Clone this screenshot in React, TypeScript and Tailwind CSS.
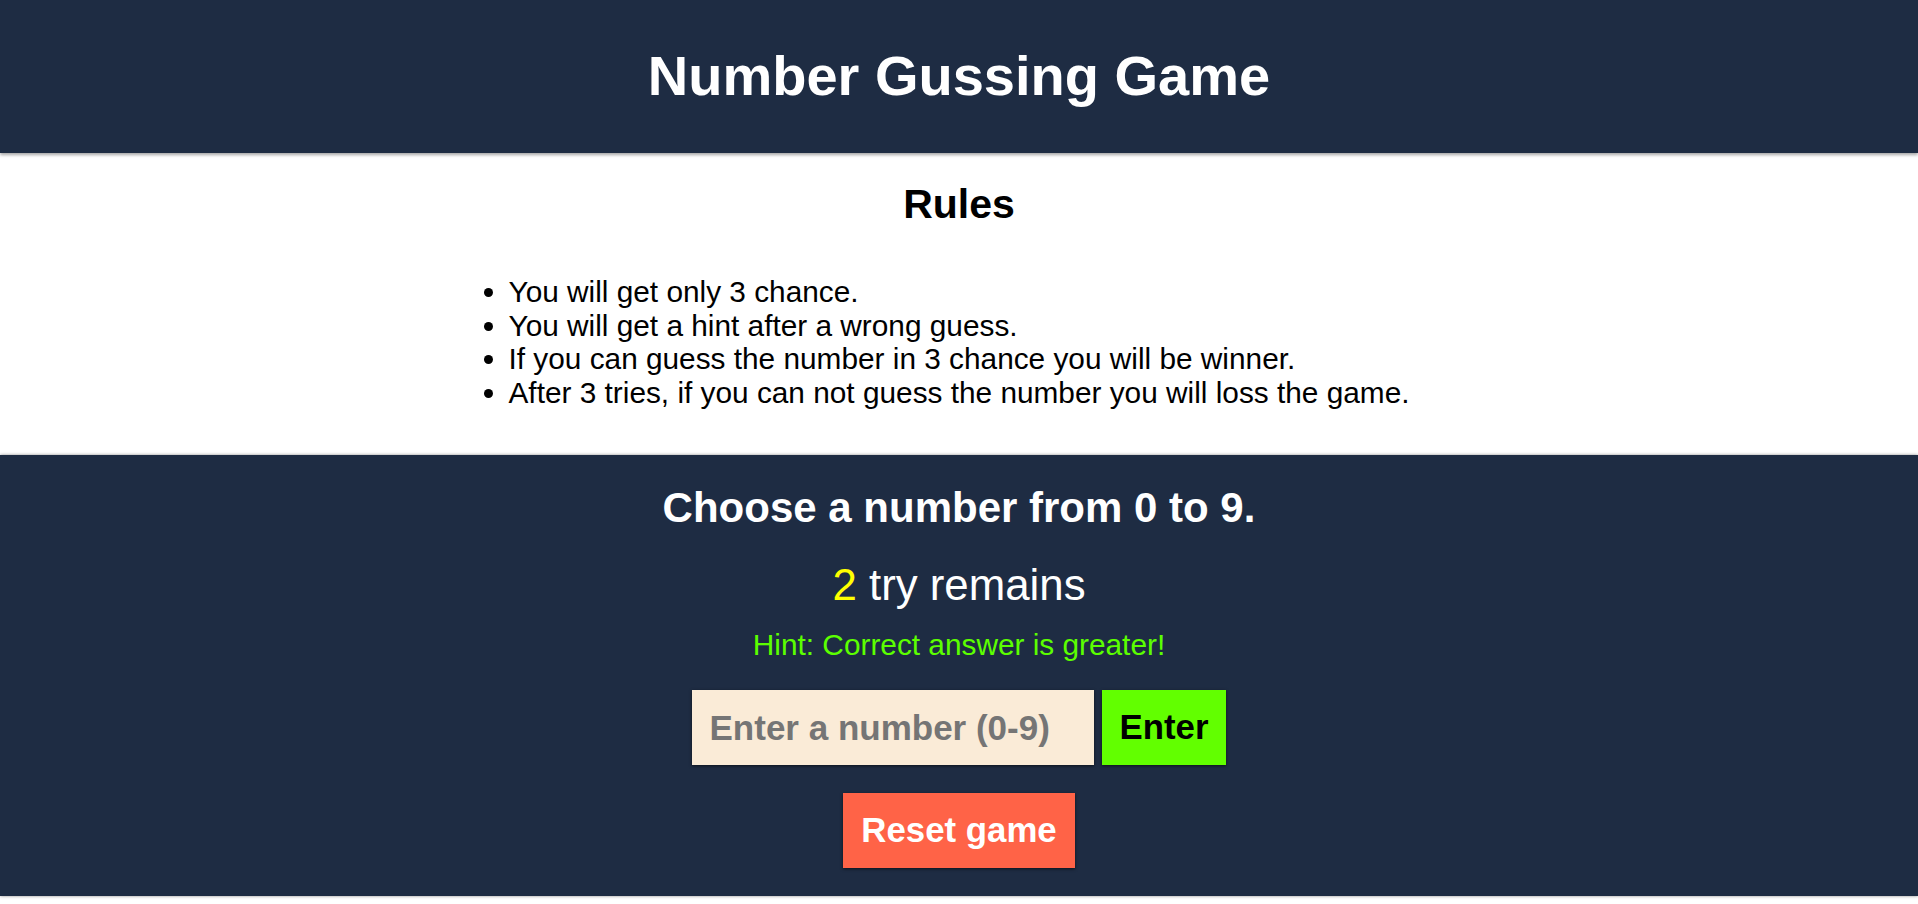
import React, { useState } from 'react';

const rules = [
    'You will get only 3 chance.',
    'You will get a hint after a wrong guess.',
    'If you can guess the number in 3 chance you will be winner.',
    'After 3 tries, if you can not guess the number you will loss the game.',
];

const App: React.FC = () => {
    const [guess, setGuess] = useState('');

    return (
        <div className="font-['Liberation_Sans',Arial,sans-serif] bg-white min-h-screen">
            <header className="relative z-10 bg-[#1e2c43] text-white text-center pt-[44px] pb-[45px] shadow-[0_2px_3px_rgba(0,0,0,0.35)]">
                <h1 className="text-[56px] font-bold leading-[64px]">Number Gussing Game</h1>
            </header>

            <section className="h-[302px] pt-[28px] text-center text-black">
                <h2 className="text-[41px] font-bold leading-[47px]">Rules</h2>
                <ul className="mt-[47px] w-fit mx-auto list-disc text-left text-[29.8px] leading-[33.7px]">
                    {rules.map((rule) => (
                        <li key={rule}>{rule}</li>
                    ))}
                </ul>
            </section>

            <section className="relative z-10 bg-[#1e2c43] text-white text-center pt-[29px] pb-[28px] shadow-[0_0_3px_rgba(0,0,0,0.45)]">
                <h2 className="text-[42px] font-bold leading-[48px]">Choose a number from 0 to 9.</h2>
                <p className="mt-[28px] text-[43.8px] leading-[49px]">
                    <span className="text-[#ffff00]">2</span> try remains
                </p>
                <p className="mt-[19px] text-[29.8px] leading-[34px] text-[#5cff00]">
                    Hint: Correct answer is greater!
                </p>
                <div className="mt-[28px] flex justify-center gap-[8px]">
                    <input
                        type="text"
                        value={guess}
                        onChange={(e) => setGuess(e.target.value)}
                        placeholder="Enter a number (0-9)"
                        className="w-[402px] h-[75px] bg-[#faebd7] pl-[18px] text-[35px] font-bold text-black placeholder:text-[#757575] outline-none shadow-[0_1px_3px_rgba(0,0,0,0.6)]"
                    />
                    <button className="h-[75px] px-[18px] bg-[#62ff00] text-black text-[34.8px] font-bold shadow-[0_1px_3px_rgba(0,0,0,0.6)]">
                        Enter
                    </button>
                </div>
                <div className="mt-[28px] flex justify-center">
                    <button className="h-[75px] px-[18px] bg-[#ff6347] text-white text-[34.8px] font-bold shadow-[0_1px_3px_rgba(0,0,0,0.6)]">
                        Reset game
                    </button>
                </div>
            </section>
        </div>
    );
};

export default App;
